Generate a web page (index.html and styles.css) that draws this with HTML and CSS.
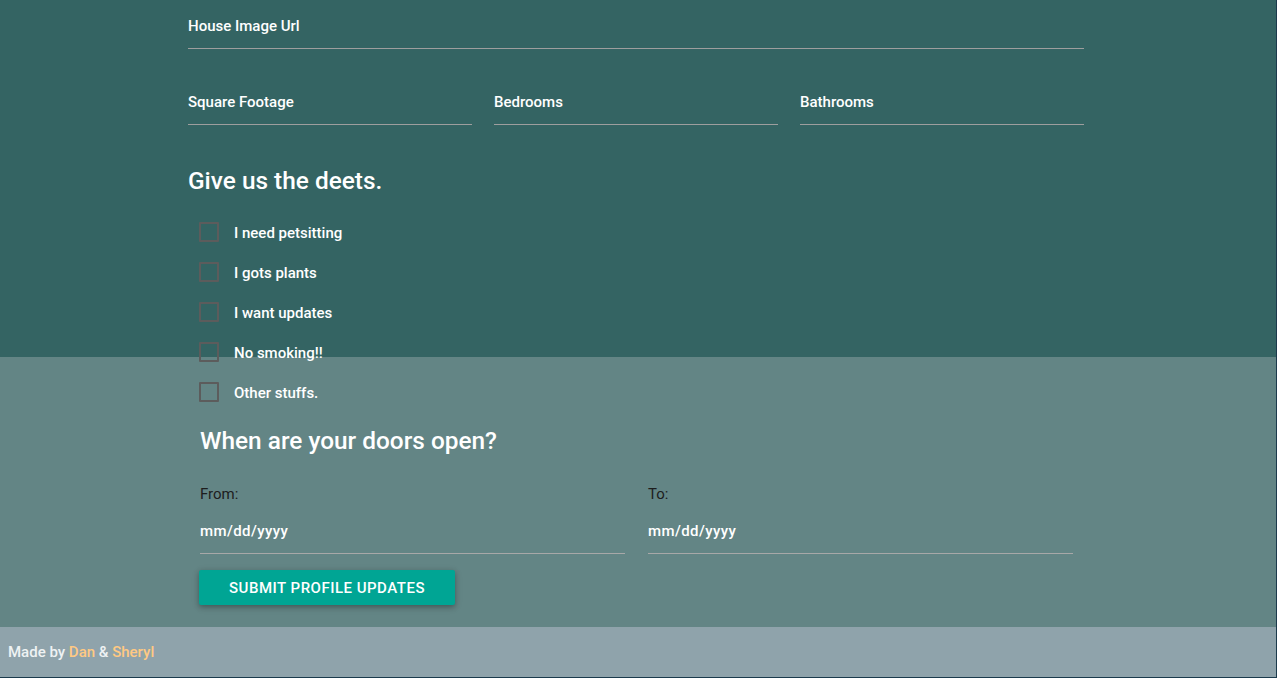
FILE: index.html
```html
<!DOCTYPE html>
<html lang="en">
<head>
<meta charset="utf-8">
<title>Profile</title>
<link rel="stylesheet" href="styles.css">
</head>
<body>
<div class="page">
  <main class="main">
    <form class="profile">
      <div class="field"><span class="field-label">House Image Url</span></div>
      <div class="row3">
        <div class="field"><span class="field-label">Square Footage</span></div>
        <div class="field"><span class="field-label">Bedrooms</span></div>
        <div class="field"><span class="field-label">Bathrooms</span></div>
      </div>
      <h4 class="heading">Give us the deets.</h4>
      <ul class="checks">
        <li class="check"><span class="box"></span><span class="check-label">I need petsitting</span></li>
        <li class="check"><span class="box"></span><span class="check-label">I gots plants</span></li>
        <li class="check"><span class="box"></span><span class="check-label">I want updates</span></li>
        <li class="check"><span class="box"></span><span class="check-label">No smoking!!</span></li>
        <li class="check"><span class="box"></span><span class="check-label">Other stuffs.</span></li>
      </ul>
    </form>
    <section class="doors">
      <h4 class="heading">When are your doors open?</h4>
      <div class="dates">
        <div class="date-col">
          <div class="date-label">From:</div>
          <div class="date-field"><span class="date-text">mm/dd/yyyy</span></div>
        </div>
        <div class="date-col">
          <div class="date-label">To:</div>
          <div class="date-field"><span class="date-text">mm/dd/yyyy</span></div>
        </div>
      </div>
      <button class="btn" type="button">Submit Profile Updates</button>
    </section>
  </main>
  <footer class="footer">Made by <a class="name" href="#">Dan</a> &amp; <a class="name" href="#">Sheryl</a></footer>
</div>
</body>
</html>
```
FILE: styles.css
```css
html {
  background: #1b3a4c;
}
body {
  margin: 0;
  font-family: Roboto, "Liberation Sans", sans-serif;
  color: #fff;
}
.page {
  margin-right: 1px;
  display: flex;
  flex-direction: column;
}
.main {
  background: linear-gradient(#346463 0, #346463 357px, #638585 357px);
  padding-bottom: 22px;
}
.profile {
  margin-left: 188px;
  width: 896px;
}
.field {
  box-sizing: border-box;
  height: 49px;
  padding-top: 4px;
  border-bottom: 1px solid #9e9e9e;
  display: flex;
  align-items: center;
}
.field-label {
  font-size: 15px;
  font-weight: 500;
  line-height: 18px;
}
.row3 {
  margin-top: 27px;
  display: grid;
  grid-template-columns: repeat(3, 1fr);
  gap: 22px;
}
.heading {
  margin: 41px 0 0;
  font-size: 24.4px;
  font-weight: 500;
  line-height: 30px;
}
.checks {
  list-style: none;
  margin: 16px 0 0;
  padding: 0 0 0 11px;
}
.check {
  height: 40px;
  display: flex;
  align-items: center;
}
.box {
  box-sizing: border-box;
  width: 20px;
  height: 20px;
  border: 2px solid #5c5c5c;
  border-radius: 1px;
}
.check-label {
  margin-left: 15px;
  padding-top: 2px;
  font-size: 15px;
  font-weight: 500;
  line-height: 18px;
}
.doors {
  margin-left: 200px;
  width: 873px;
}
.doors .heading {
  margin-top: 14px;
}
.dates {
  margin-top: 29px;
  display: grid;
  grid-template-columns: 1fr 1fr;
  gap: 23px;
}
.date-label {
  font-size: 15px;
  line-height: 18px;
  color: #1d1d1d;
}
.date-field {
  box-sizing: border-box;
  height: 51px;
  padding-top: 18px;
  border-bottom: 1px solid #a8a8a8;
}
.date-text {
  font-size: 15px;
  font-weight: 500;
  line-height: 18px;
  letter-spacing: 0.4px;
}
.btn {
  margin-top: 16px;
  margin-left: -1px;
  width: 256px;
  height: 35px;
  border: none;
  border-radius: 2px;
  background: #00a594;
  color: #fff;
  font-family: inherit;
  font-size: 15px;
  font-weight: 500;
  letter-spacing: 0.5px;
  text-transform: uppercase;
  box-shadow: 0 2px 5px rgba(0, 0, 0, 0.25), 0 2px 8px rgba(0, 0, 0, 0.12);
  cursor: pointer;
}
.footer {
  height: 50px;
  box-sizing: border-box;
  padding-left: 8px;
  display: flex;
  align-items: center;
  background: #8fa3ab;
  color: #eef2f3;
  font-size: 15px;
  font-weight: 500;
  white-space: pre;
}
.name {
  color: #ffc983;
  text-decoration: none;
}
```
